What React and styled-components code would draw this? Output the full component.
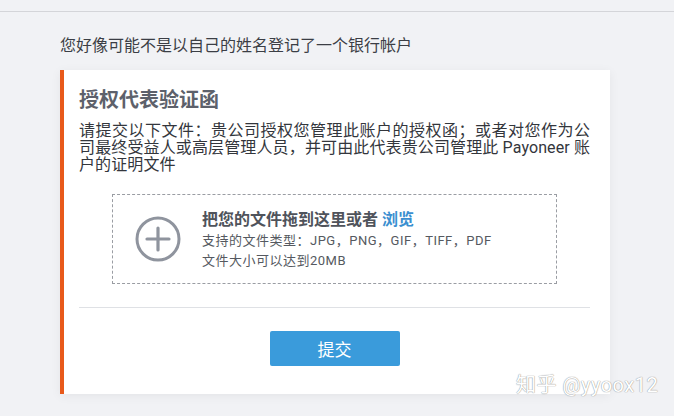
import React from 'react'
import styled, { createGlobalStyle } from 'styled-components'

const GlobalStyle = createGlobalStyle`
  html, body {
    margin: 0;
    padding: 0;
    background: #f1f2f5;
    font-family: Roboto, "Noto Sans CJK SC", sans-serif;
  }
`

const Page = styled.div`
  position: relative;
  width: 674px;
  height: 416px;
  overflow: hidden;
`

const TopBar = styled.div`
  height: 11px;
  border-bottom: 1px solid #d4d5d9;
`

const Main = styled.div`
  padding: 23px 0 0 60px;
`

const Notice = styled.div`
  font-size: 16px;
  line-height: 22px;
  color: #3b3e45;
`

const Card = styled.div`
  margin-top: 13px;
  width: 511px;
  background: #fff;
  border-left: 4px solid #e8591a;
  padding: 17px 20px 28px 15px;
  box-shadow: 0 2px 10px rgba(0, 0, 0, 0.06);
`

const Title = styled.h2`
  margin: 0;
  font-size: 20px;
  line-height: 26px;
  font-weight: 700;
  color: #5d616b;
`

const Desc = styled.p`
  margin: 9px 0 0;
  font-size: 16px;
  line-height: 17px;
  letter-spacing: 0.1px;
  text-align: justify;
  color: #33363c;
`

const DropZone = styled.div`
  margin: 21px 0 0 33px;
  width: 445px;
  height: 90px;
  box-sizing: border-box;
  border: 1px dashed #9a9da3;
  display: flex;
  align-items: center;
  padding-left: 22px;
  gap: 21px;
`

const DropText = styled.div`
  display: flex;
  flex-direction: column;
  padding-top: 2px;
`

const DropTitle = styled.div`
  font-size: 16px;
  line-height: 22px;
  font-weight: 700;
  color: #4f535b;
`

const Browse = styled.span`
  color: #3a8fd0;
`

const DropHint = styled.div`
  font-size: 13px;
  line-height: 20px;
  color: #555960;
  letter-spacing: 0.5px;
`

const Divider = styled.hr`
  margin: 23px 0 0;
  border: 0;
  border-top: 1px solid #dfe1e5;
`

const Actions = styled.div`
  display: flex;
  justify-content: center;
  padding-top: 23px;
`

const SubmitButton = styled.button`
  width: 130px;
  height: 35px;
  border: 0;
  border-radius: 2px;
  background: #3a9bdb;
  color: #fff;
  font-family: inherit;
  font-size: 17px;
`

const Watermark = styled.div`
  position: absolute;
  left: 516px;
  top: 372px;
  font-size: 20px;
  line-height: 26px;
  color: #fff;
  text-shadow: 0 0 1px #999, 0 0 1px #999;
  letter-spacing: 0.5px;
`

function PlusCircle() {
  return (
    <svg width="46" height="46" viewBox="0 0 46 46">
      <circle cx="23" cy="23" r="21" fill="none" stroke="#8f949e" strokeWidth="3" />
      <path d="M23 12v22M12 23h22" stroke="#8f949e" strokeWidth="3.2" strokeLinecap="round" />
    </svg>
  )
}

export default function App() {
  return (
    <Page>
      <GlobalStyle />
      <TopBar />
      <Main>
        <Notice>您好像可能不是以自己的姓名登记了一个银行帐户</Notice>
        <Card>
          <Title>授权代表验证函</Title>
          <Desc>
            请提交以下文件：贵公司授权您管理此账户的授权函；或者对您作为公司最终受益人或高层管理人员，并可由此代表贵公司管理此 Payoneer 账户的证明文件
          </Desc>
          <DropZone>
            <PlusCircle />
            <DropText>
              <DropTitle>
                把您的文件拖到这里或者 <Browse>浏览</Browse>
              </DropTitle>
              <DropHint>支持的文件类型：JPG，PNG，GIF，TIFF，PDF</DropHint>
              <DropHint>文件大小可以达到20MB</DropHint>
            </DropText>
          </DropZone>
          <Divider />
          <Actions>
            <SubmitButton>提交</SubmitButton>
          </Actions>
        </Card>
      </Main>
      <Watermark>知乎 @yyoox12</Watermark>
    </Page>
  )
}
